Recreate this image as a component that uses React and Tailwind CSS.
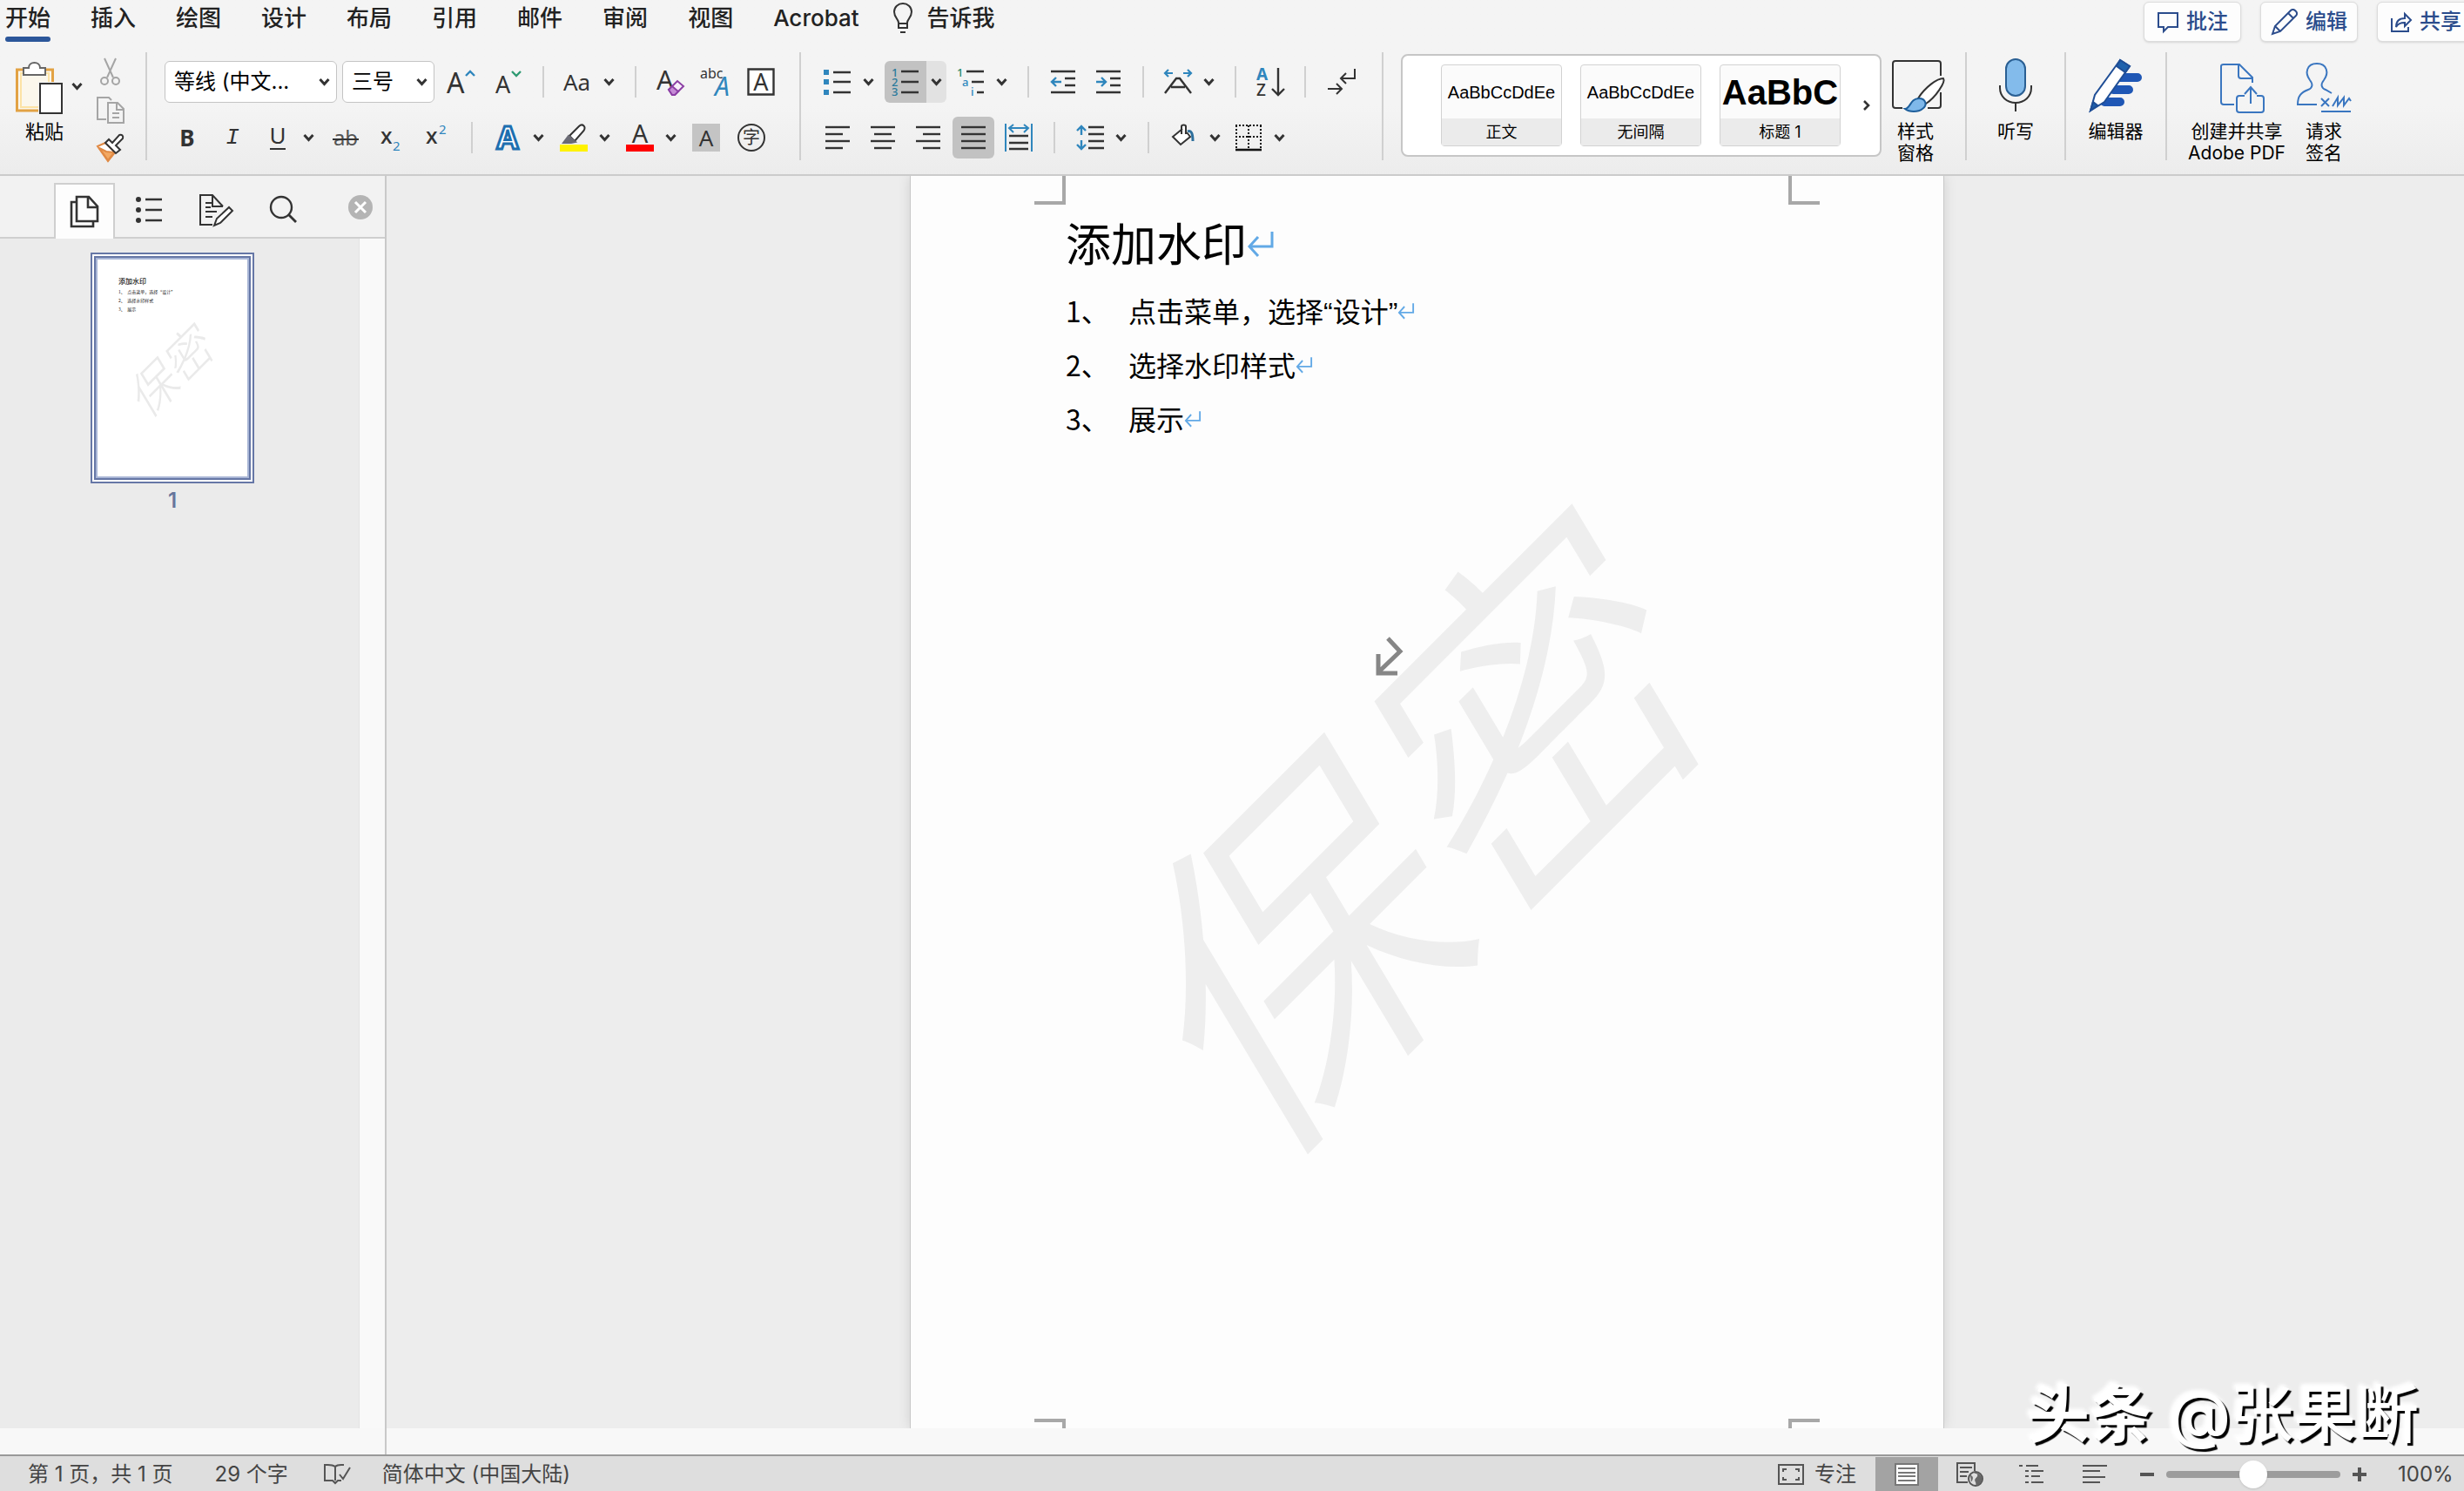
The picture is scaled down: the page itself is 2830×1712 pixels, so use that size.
import React from 'react';
import clsx from 'clsx';

const INK = '#333333';
const BLUE = '#2f86bd';

const Svg = ({ w = 32, h = 32, className, children }) => (
    <svg
        width={w}
        height={h}
        viewBox={`0 0 ${w} ${h}`}
        fill="none"
        stroke={INK}
        strokeWidth="2"
        className={clsx('shrink-0 overflow-visible', className)}
        aria-hidden="true"
    >
        {children}
    </svg>
);

const Glyph = ({ x, y, size, fill = INK, children, ...rest }) => (
    <text x={x} y={y} fontSize={size} fill={fill} stroke="none" fontFamily="'Noto Sans', sans-serif" {...rest}>
        {children}
    </text>
);

const Chevron = ({ className }) => (
    <Svg w={13} h={10} className={className}>
        <path d="M1.5 2l5 5.5L11.5 2" strokeWidth="3" />
    </Svg>
);

const IconButton = ({ label, children, className }) => (
    <button type="button" aria-label={label} className={clsx('flex w-8 h-12 shrink-0 items-center justify-center', className)}>
        {children}
    </button>
);

// icon with a small drop-down arrow at its right
const SplitButton = ({ label, children }) => (
    <div className="flex shrink-0 items-center gap-[13px]">
        <IconButton label={label}>{children}</IconButton>
        <button type="button" aria-label={`${label}选项`} className="flex h-12 items-center">
            <Chevron />
        </button>
    </div>
);

const Divider = ({ tall, className }) => (
    <div className={clsx('w-[2px] shrink-0 bg-[#d0d0d0]', tall ? 'h-[124px]' : 'h-9', className)} />
);

const Lines = ({ rows }) => (
    <Svg>
        {rows.map(([x1, x2], i) => (
            <path key={i} d={`M${x1} ${4 + i * 8}H${x2}`} strokeWidth="2.4" />
        ))}
    </Svg>
);

/* ---------- top tabs ---------- */

const tabs = ['开始', '插入', '绘图', '设计', '布局', '引用', '邮件', '审阅', '视图', 'Acrobat'];

const CornerButton = ({ icon, label }) => (
    <button
        type="button"
        className="flex h-[46px] w-28 shrink-0 items-center justify-center gap-2 rounded-md border border-[#dcdcdc] bg-[#fdfdfd] text-2xl font-medium text-[#2b4c8c] shadow-sm"
    >
        {icon}
        <span className="whitespace-nowrap">{label}</span>
    </button>
);

const TabBar = () => (
    <nav className="flex h-[60px] items-start pl-1.5">
        <div className="flex shrink-0 gap-[46px]">
            {tabs.map((tab, i) => (
                <button key={tab} type="button" className="flex flex-col text-[26px] leading-[42px] font-medium text-[#222]">
                    <span>{tab}</span>
                    {i === 0 && <span className="h-1.5 w-full rounded-full bg-[#2b569a]" />}
                </button>
            ))}
        </div>
        <button type="button" className="ml-[38px] flex shrink-0 items-center gap-4 text-[26px] leading-[42px] font-medium text-[#222]">
            <Svg w={24} h={38}>
                <path d="M7 24c0-4-5-6-5-12.500C2 6 6.500 2 12 2s10 4 10 9.500C22 18 17 20 17 24v6H7zM7 25h10M9 35h6" />
            </Svg>
            告诉我
        </button>
        <div className="ml-auto -mr-3 flex gap-[22px] pt-0.5">
            <CornerButton
                label="批注"
                icon={
                    <Svg w={26} h={26}>
                        <path d="M2 3h22v16H13l-5 5v-5H2z" stroke="#2b4c8c" />
                    </Svg>
                }
            />
            <CornerButton
                label="编辑"
                icon={
                    <Svg w={32} h={32}>
                        <path d="M2 30l3-9L23 3c2-2 4-1 5.500.500S31 7 29 9L11 27zM5 21l6 6M20 6l6 6" stroke="#2b4c8c" />
                    </Svg>
                }
            />
            <CornerButton
                label="共享"
                icon={
                    <Svg w={26} h={26}>
                        <path d="M2 9v15h19v-5M7 19c0-7 4-10 10-10V4l7 7-7 7v-4c-5 0-8 1-10 5z" stroke="#2b4c8c" />
                    </Svg>
                }
            />
        </div>
    </nav>
);

/* ---------- ribbon ---------- */

const PasteGroup = () => (
    <div className="flex shrink-0 gap-4 pt-1.5 pl-4">
        <div className="flex gap-2">
            <button type="button" className="flex w-[58px] flex-col items-center pt-1 text-[22px] leading-[26px] text-black">
                <Svg w={56} h={62} className="mb-1.5">
                    <path d="M2.500 10h41v47h-41z" stroke="#e2a244" strokeWidth="3" fill="#fbf7ec" />
                    <path d="M7 14h32v39H7z" stroke="#fce3a6" />
                    <path d="M10 16V8h6c0-4 3-6 6.500-6S29 4 29 8h6v8z" fill="#fff" stroke="#666" />
                    <path d="M27 24h30v38H27z" fill="#f3f3f3" stroke="none" />
                    <path d="M29 26h25v34H29z" fill="#fff" />
                </Svg>
                <span className="pl-3">粘贴</span>
            </button>
            <button type="button" aria-label="粘贴选项" className="h-[65px]">
                <Chevron />
            </button>
        </div>
        <div className="flex flex-col gap-3">
            <button type="button" aria-label="剪切">
                <Svg>
                    <path d="M9 1l10 22M22 1L12 23" stroke="#a5a5a5" />
                    <circle cx="9" cy="27" r="4" stroke="#a5a5a5" />
                    <circle cx="22" cy="27" r="4" stroke="#a5a5a5" />
                </Svg>
            </button>
            <button type="button" aria-label="复制">
                <Svg>
                    <path d="M11 27H1V2h13l3 3M13 8h11l7 7v16H13zM23 8v8h8M18 20h8M18 25h8" stroke="#a5a5a5" />
                </Svg>
            </button>
            <button type="button" aria-label="格式刷">
                <Svg>
                    <path d="M1 14l9-4 11 11-8 10z" fill="#fff" stroke="#e08a45" />
                    <path d="M3 16l8 4 9 1-7 9z" fill="#f3a963" stroke="#e08a45" />
                    <path d="M10 10l4-4 4 4 8-9c3-1 5 1 4 4l-8 8 5 5-5 4z" fill="#fff" />
                </Svg>
            </button>
        </div>
    </div>
);

const Dropdown = ({ label, value, className }) => (
    <div className={clsx('relative shrink-0', className)}>
        <select aria-label={label} className="h-12 w-full appearance-none rounded-md border border-[#c4c4c4] bg-white pl-2.5 text-2xl text-black">
            <option>{value}</option>
        </select>
        <Chevron className="pointer-events-none absolute top-[19px] right-2" />
    </div>
);

const FontGroup = () => (
    <div className="flex shrink-0 flex-col gap-4 pl-5">
        <div className="flex items-center gap-[23px]">
            <div className="flex items-center gap-1.5">
                <Dropdown label="字体" value="等线 (中文..." className="w-[198px]" />
                <Dropdown label="字号" value="三号" className="w-[106px]" />
                <IconButton label="增大字号" className="ml-2">
                    <Svg>
                        <Glyph x="0" y="29" size="32">A</Glyph>
                        <path d="M22 9l5-5 5 5" stroke={BLUE} strokeWidth="2.4" />
                    </Svg>
                </IconButton>
            </div>
            <IconButton label="减小字号">
                <Svg>
                    <Glyph x="1" y="29" size="27">A</Glyph>
                    <path d="M20 4l5 5 5-5" stroke="#2f9a72" strokeWidth="2.4" />
                </Svg>
            </IconButton>
            <Divider />
            <SplitButton label="更改大小写">
                <Svg w={34}>
                    <Glyph x="0" y="26" size="26">Aa</Glyph>
                </Svg>
            </SplitButton>
            <Divider />
            <div className="flex gap-5">
                <IconButton label="清除格式">
                    <Svg>
                        <Glyph x="0" y="25" size="31">A</Glyph>
                        <path d="M14 25l10-10 7 6-10 10h-3z" fill="#f8effb" stroke="#8c3fa5" />
                        <path d="M14 25l4-4 7 6-4 4h-3z" fill="#c58bd6" stroke="#8c3fa5" />
                    </Svg>
                </IconButton>
                <IconButton label="拼音指南">
                    <Svg w={36} h={34}>
                        <Glyph x="0" y="13" size="16">abc</Glyph>
                        <Glyph x="17" y="33" size="30" fill={BLUE} fontStyle="italic">A</Glyph>
                    </Svg>
                </IconButton>
                <IconButton label="字符边框">
                    <Svg>
                        <path d="M1.500 1.500h29v29h-29z" fill="#fff" strokeWidth="2.4" />
                        <Glyph x="16" y="26" size="27" textAnchor="middle">A</Glyph>
                    </Svg>
                </IconButton>
            </div>
        </div>
        <div className="flex items-center gap-6 pl-2.5">
            <div className="flex gap-5 text-[26px] text-[#333]">
                <IconButton label="加粗" className="font-bold font-['Noto_Sans',sans-serif]">B</IconButton>
                <IconButton label="倾斜" className="italic font-['Liberation_Mono',monospace]">I</IconButton>
                <SplitButton label="下划线">
                    <Svg>
                        <Glyph x="16" y="23" size="26" textAnchor="middle">U</Glyph>
                        <path d="M7 29h18" />
                    </Svg>
                </SplitButton>
                <IconButton label="删除线">
                    <Svg>
                        <Glyph x="16" y="25" size="24" fill="#555" textAnchor="middle">ab</Glyph>
                        <path d="M1 18h30" />
                    </Svg>
                </IconButton>
                <IconButton label="下标">
                    <Svg>
                        <Glyph x="4" y="23" size="25" fontWeight="500">x</Glyph>
                        <Glyph x="18" y="31" size="15" fill={BLUE}>2</Glyph>
                    </Svg>
                </IconButton>
                <IconButton label="上标">
                    <Svg>
                        <Glyph x="4" y="23" size="25" fontWeight="500">x</Glyph>
                        <Glyph x="19" y="12" size="15" fill={BLUE}>2</Glyph>
                    </Svg>
                </IconButton>
            </div>
            <Divider />
            <div className="flex gap-[18px]">
                <SplitButton label="文本效果">
                    <Svg w={34} h={34}>
                        <text
                            x="17"
                            y="30"
                            fontSize="36"
                            fontWeight="bold"
                            fontFamily="'Noto Sans', sans-serif"
                            textAnchor="middle"
                            fill="#fff"
                            stroke="#1d6fb0"
                            strokeWidth="3"
                        >
                            A
                        </text>
                    </Svg>
                </SplitButton>
                <SplitButton label="突出显示">
                    <Svg>
                        <path d="M0 24h32v8H0z" fill="#fff200" stroke="none" />
                        <path d="M11 14L22 3c2-2 4-2 5.500-.500s1.500 3 0 5.500L17 20z" fill="#fff" />
                        <path d="M10 14l8 7-5 1H4z" fill="#6b6b75" stroke="#6b6b75" />
                    </Svg>
                </SplitButton>
                <SplitButton label="字体颜色">
                    <Svg>
                        <Glyph x="16" y="22" size="29" textAnchor="middle">A</Glyph>
                        <path d="M0 24h32v8H0z" fill="#ff0000" stroke="none" />
                    </Svg>
                </SplitButton>
                <div className="flex gap-5">
                    <IconButton label="字符底纹">
                        <Svg>
                            <path d="M0 0h32v32H0z" fill="#c4c4c4" stroke="none" />
                            <Glyph x="16" y="26" size="26" textAnchor="middle">A</Glyph>
                        </Svg>
                    </IconButton>
                    <IconButton label="带圈字符">
                        <Svg>
                            <circle cx="16" cy="16" r="15" />
                            <text x="16" y="23" fontSize="20" textAnchor="middle" fill={INK} stroke="none" fontFamily="'Noto Sans CJK SC', sans-serif">
                                字
                            </text>
                        </Svg>
                    </IconButton>
                </div>
            </div>
        </div>
    </div>
);

const ParagraphGroup = () => (
    <div className="flex shrink-0 flex-col gap-4 pl-[26px]">
        <div className="flex items-center gap-[23px]">
            <div className="flex items-center gap-3">
                <SplitButton label="项目符号">
                    <Svg>
                        <path d="M0 2h6v6H0zM0 13h6v6H0zM0 25h6v6H0z" fill={BLUE} stroke="none" />
                        <path d="M11 5h20M11 16h20M11 28h20" strokeWidth="2.4" />
                    </Svg>
                </SplitButton>
                <div className="flex overflow-hidden rounded-md">
                    <button type="button" aria-label="编号" aria-pressed="true" className="flex h-12 w-12 items-center justify-center bg-[#c2c2c2]">
                        <Svg h={34}>
                            <Glyph x="0" y="11" size="13" fill="#2a7a9c" fontWeight="500">1</Glyph>
                            <Glyph x="0" y="22" size="13" fill="#2a7a9c" fontWeight="500">2</Glyph>
                            <Glyph x="0" y="33" size="13" fill="#2a7a9c" fontWeight="500">3</Glyph>
                            <path d="M11 5h20M11 17h20M11 29h20" strokeWidth="2.4" />
                        </Svg>
                    </button>
                    <button type="button" aria-label="编号选项" className="flex h-12 w-[23px] items-center justify-center bg-[#e2e2e2]">
                        <Chevron />
                    </button>
                </div>
                <SplitButton label="多级列表">
                    <Svg h={34}>
                        <Glyph x="0" y="11" size="13" fill="#2a8a6c" fontWeight="500">1</Glyph>
                        <Glyph x="6" y="22" size="13" fill={BLUE} fontWeight="500">a</Glyph>
                        <Glyph x="16" y="33" size="13" fill={BLUE} fontWeight="500">i</Glyph>
                        <path d="M11 5h20M17 17h14M23 29h8" strokeWidth="2.4" />
                    </Svg>
                </SplitButton>
            </div>
            <Divider />
            <div className="flex gap-5">
                <IconButton label="减少缩进量">
                    <Svg>
                        <path d="M2 4h28M18 12h12M18 20h12M2 28h28" strokeWidth="2.4" />
                        <path d="M14 16H3M8 11l-5 5 5 5" stroke={BLUE} strokeWidth="2.4" />
                    </Svg>
                </IconButton>
                <IconButton label="增加缩进量">
                    <Svg>
                        <path d="M2 4h28M18 12h12M18 20h12M2 28h28" strokeWidth="2.4" />
                        <path d="M2 16h11M8 11l5 5-5 5" stroke={BLUE} strokeWidth="2.4" />
                    </Svg>
                </IconButton>
            </div>
            <Divider />
            <SplitButton label="中文版式">
                <Svg>
                    <path d="M10 6H1M5 2L1 6l4 4M22 6h9M27 2l4 4-4 4" stroke={BLUE} strokeWidth="2.2" />
                    <path d="M1 29L14 12h4l13 17M8 22h16" strokeWidth="2.4" />
                </Svg>
            </SplitButton>
            <Divider />
            <IconButton label="排序">
                <Svg>
                    <Glyph x="0" y="14" size="19" fill={BLUE} fontWeight="bold">A</Glyph>
                    <Glyph x="0" y="32" size="19" fontWeight="500">Z</Glyph>
                    <path d="M25 0v30M18 24l7 7 7-7" strokeWidth="2.4" />
                </Svg>
            </IconButton>
            <Divider />
            <IconButton label="显示编辑标记" className="ml-0.5">
                <Svg>
                    <path d="M31 1v11H15M21 6l-6 6 6 6M0 24h16M10 18l6 6-6 6" />
                </Svg>
            </IconButton>
        </div>
        <div className="flex items-center gap-6">
            <div className="flex gap-5">
                <IconButton label="左对齐">
                    <Lines rows={[[2, 30], [2, 22], [2, 30], [2, 22]]} />
                </IconButton>
                <IconButton label="居中">
                    <Lines rows={[[2, 30], [6, 26], [2, 30], [6, 26]]} />
                </IconButton>
                <IconButton label="右对齐">
                    <Lines rows={[[2, 30], [10, 30], [2, 30], [10, 30]]} />
                </IconButton>
                <button type="button" aria-label="两端对齐" aria-pressed="true" className="-mx-2 flex h-12 w-12 items-center justify-center rounded-md bg-[#c2c2c2]">
                    <Lines rows={[[2, 30], [2, 30], [2, 30], [2, 30]]} />
                </button>
                <IconButton label="分散对齐">
                    <Svg>
                        <path d="M1 0v32M31 0v32M5 5h22M10 1L5 5l5 5M22 1l5 4-5 5" stroke={BLUE} />
                        <path d="M5 14h22M5 22h22M5 29h22" strokeWidth="2.4" />
                    </Svg>
                </IconButton>
            </div>
            <Divider />
            <SplitButton label="行距">
                <Svg>
                    <path d="M6 13V3M1 8l5-5 5 5M6 19v10M1 24l5 5 5-5" stroke={BLUE} strokeWidth="2.4" />
                    <path d="M14 4h18M14 12h18M14 20h18M14 28h18" strokeWidth="2.4" />
                </Svg>
            </SplitButton>
            <Divider />
            <div className="flex gap-4">
                <SplitButton label="底纹">
                    <Svg>
                        <path d="M14 6L3 15l9 9 11-9-4-5M13 12V3c0-2 5-2 5 0v9" fill="#fff" />
                        <path d="M20 9c4-2 6 2 6 11" stroke="#2d6f9c" strokeWidth="3" />
                    </Svg>
                </SplitButton>
                <SplitButton label="边框">
                    <Svg>
                        <path d="M1 2h30M1 15h30M2 2v26M16 2v26M30 2v26" strokeDasharray="2 2" stroke="#111" />
                        <path d="M1 30h30" stroke="#111" strokeWidth="2.6" />
                    </Svg>
                </SplitButton>
            </div>
        </div>
    </div>
);

const styles = [
    { name: '正文', sample: 'AaBbCcDdEe' },
    { name: '无间隔', sample: 'AaBbCcDdEe' },
    { name: '标题 1', sample: 'AaBbC', heading: true },
];

const StyleGallery = () => (
    <div className="ml-5 mt-0.5 flex h-[118px] w-[552px] shrink-0 items-center gap-[21px] rounded-lg border-2 border-[#c6c6c6] bg-white pl-11">
        {styles.map((style) => (
            <button
                key={style.name}
                type="button"
                className="flex h-[94px] w-[139px] flex-col rounded border border-[#d2d2d2] bg-[#fbfbfb] text-black"
            >
                <span
                    className={clsx(
                        "flex w-full flex-1 items-center justify-center font-['Liberation_Sans',sans-serif]",
                        style.heading ? 'text-[40px] font-bold leading-10' : 'text-xl'
                    )}
                >
                    {style.sample}
                </span>
                <span className="w-full bg-[#ebebeb] text-center text-lg leading-[31px]">{style.name}</span>
            </button>
        ))}
        <button type="button" aria-label="更多样式" className="ml-1">
            <Svg w={10} h={14}>
                <path d="M2 2l5 5-5 5" strokeWidth="2.6" />
            </Svg>
        </button>
    </div>
);

const BigButton = ({ icon, lines, className }) => (
    <button type="button" className={clsx('flex shrink-0 flex-col items-center self-start pt-1.5 text-[21px] leading-[25px] text-black', className)}>
        {icon}
        <span className="mt-2 block whitespace-nowrap">
            {lines.map((line) => (
                <span key={line} className="block">{line}</span>
            ))}
        </span>
    </button>
);

const Ribbon = () => (
    <div className="flex h-[142px] items-start border-b-2 border-[#cbcbcb]">
        <PasteGroup />
        <Divider tall className="ml-6" />
        <div className="pt-2.5"><FontGroup /></div>
        <Divider tall className="ml-7" />
        <div className="pt-2.5"><ParagraphGroup /></div>
        <Divider tall className="ml-[30px]" />
        <StyleGallery />
        <BigButton
            className="mr-[22px] ml-1 w-[70px]"
            lines={['样式', '窗格']}
            icon={
                <Svg w={70} h={64}>
                    <g transform="translate(8 0)">
                        <path d="M56 21V7c0-2-1-3-3-3H4C2 4 1 5 1 7v48c0 2 1 3 3 3h8M41 58h12c2 0 3-1 3-3V40" />
                        <path d="M30 47C38 34 52 24 59 24c3 4-9 22-20 29z" fill="#fff" />
                        <path d="M15 59c6 0 6-12 16-12 8 0 10 8 4 12-5 4-15 4-20 0z" fill="#7fb8ea" stroke="#1e5f9c" />
                    </g>
                </Svg>
            }
        />
        <Divider tall />
        <BigButton
            className="w-28"
            lines={['听写']}
            icon={
                <Svg w={40} h={64}>
                    <rect x="9" y="2" width="22" height="42" rx="11" fill="#83bbeb" stroke="#2a5f93" />
                    <path d="M2 32v3c0 10 8 17 18 17s18-7 18-17v-3M20 52v10" />
                </Svg>
            }
        />
        <Divider tall />
        <BigButton
            className="w-[114px]"
            lines={['编辑器']}
            icon={
                <Svg w={62} h={64}>
                    <path d="M34 23h22M28 37h18M18 51h18" stroke="#1f57b5" strokeWidth="10" strokeLinecap="round" />
                    <path d="M2 61l5-18L36 3l11 7-29 41z" fill="#fff" stroke="#1f4e96" />
                    <path d="M36 3l-4 7 10 7 5-7zM2 61l3-10 5 4z" fill="#1f62ad" stroke="#1f4e96" />
                </Svg>
            }
        />
        <Divider tall />
        <BigButton
            className="ml-[22px] w-[116px]"
            lines={['创建并共享', 'Adobe PDF']}
            icon={
                <Svg w={64} h={64}>
                    <g transform="translate(12 0)">
                        <path d="M17 54H5c-2 0-3-1-3-3V10c0-1 1-2 3-2h18l15 15v6M22 8v13c0 2 1 3 3 3h13" stroke="#3a76c0" />
                        <path d="M29 44h-6c-2 0-3 1-3 3v13c0 2 1 3 3 3h25c2 0 3-1 3-3V47c0-2-1-3-3-3h-5M36 53V35M29 42l7-8 7 8" stroke="#3a76c0" />
                    </g>
                </Svg>
            }
        />
        <BigButton
            className="ml-2 w-[68px]"
            lines={['请求', '签名']}
            icon={
                <Svg w={64} h={64}>
                    <path d="M24 54H2c0-10 4-14 12-17 5-2 6-6 2-11-6-8-4-19 8-19s14 11 8 19c-4 5-3 9 2 11l7 4" stroke="#3a76c0" />
                    <path d="M29 47l9 9M38 47l-9 9M42 56l6-10v9l7-9v9l6-8 2 3M29 62h34" stroke="#3a76c0" />
                </Svg>
            }
        />
    </div>
);

/* ---------- side panel ---------- */

const SideTab = ({ label, active, children }) => (
    <button
        type="button"
        aria-label={label}
        aria-pressed={!!active}
        className={clsx(
            'flex h-full items-center justify-center',
            active ? 'w-[70px] border-x-2 border-t-2 border-[#cfcfcf] bg-[#fdfdfd]' : 'w-[77px] border-b-2 border-[#cfcfcf]'
        )}
    >
        {children}
    </button>
);

const thumbLines = ['1、　点击菜单，选择“设计”', '2、　选择水印样式', '3、　展示'];

const SidePanel = () => (
    <aside className="flex w-[444px] shrink-0 flex-col border-r-2 border-[#c9c9c9]">
        <div className="flex h-[72px] bg-[#f2f2f2] pt-2">
            <div className="w-[62px] border-b-2 border-[#cfcfcf]" />
            <SideTab label="缩略图" active>
                <Svg w={34} h={38}>
                    <path d="M7 8H2v28h25v-5M8 2h14l10 11v17H8zM21 2v12h11" strokeWidth="2.6" />
                </Svg>
            </SideTab>
            <SideTab label="文档结构图">
                <Svg w={34} h={34}>
                    <path d="M13 5h19M13 17h19M13 29h19" strokeWidth="2.4" />
                    <circle cx="5" cy="5" r="3" fill={INK} stroke="none" />
                    <circle cx="5" cy="17" r="3" fill={INK} stroke="none" />
                    <circle cx="5" cy="29" r="3" fill={INK} stroke="none" />
                </Svg>
            </SideTab>
            <SideTab label="审阅窗格">
                <Svg w={40} h={38}>
                    <path d="M16 36H2V2h14l12 13M16 2v13h12M8 11h7M8 16h6M8 21h13M8 27h8" />
                    <path d="M18 37l3-8 14-13 4 4-14 14z" fill="#fff" />
                </Svg>
            </SideTab>
            <SideTab label="查找">
                <Svg w={32} h={34}>
                    <circle cx="14" cy="14" r="12" strokeWidth="2.4" />
                    <path d="M22 22l9 9" strokeWidth="2.8" />
                </Svg>
            </SideTab>
            <div className="flex flex-1 justify-end border-b-2 border-[#cfcfcf] pt-3.5 pr-3.5">
                <button type="button" aria-label="关闭" className="h-7">
                    <Svg w={28} h={28}>
                        <circle cx="14" cy="14" r="14" fill="#b4b4b4" stroke="none" />
                        <path d="M8 8l12 12M20 8L8 20" stroke="#fff" strokeWidth="3" />
                    </Svg>
                </button>
            </div>
        </div>
        <div className="flex min-h-0 flex-1">
            <div className="flex flex-1 flex-col items-center bg-[#ebebeb] pt-4 pr-4">
                <button type="button" className="relative flex h-[265px] w-[188px] flex-col overflow-hidden border-[6px] border-double border-[#6677a6] bg-white pt-5 pl-[26px] text-left font-['Noto_Sans_CJK_SC',sans-serif] text-[#222] ring-2 ring-[#a9b6d6] ring-inset">
                    <span className="text-[8px] leading-[14px] font-medium">添加水印</span>
                    {thumbLines.map((line) => (
                        <span key={line} className="block text-[5px] leading-[10px] whitespace-nowrap">{line}</span>
                    ))}
                    <span className="absolute top-[94px] left-[26px] -rotate-45 text-[56px] leading-[72px] font-light whitespace-nowrap text-[#eaeaea] italic">
                        保密
                    </span>
                </button>
                <span className="pt-1 text-2xl font-semibold text-[#66759c]">1</span>
            </div>
            <div className="w-[30px] border-l border-[#e2e2e2] bg-[#f9f9f9]" />
        </div>
        <div className="h-[30px] bg-[#f8f8f8]" />
    </aside>
);

/* ---------- document ---------- */

const ParagraphMark = ({ large }) => (
    <svg
        width={large ? 32 : 20}
        height={large ? 32 : 20}
        viewBox="0 0 32 32"
        fill="none"
        stroke="#62a9e6"
        strokeWidth="3"
        className={clsx('inline-block', large ? 'align-[4px]' : 'align-[3px]')}
        aria-hidden="true"
    >
        <path d="M29 2v17H3M13 8L3 19l10 11" />
    </svg>
);

const Quote = ({ children }) => <span className="font-['Liberation_Sans',sans-serif]">{children}</span>;

const listItems = [
    <>点击菜单，选择<Quote>“</Quote>设计<Quote>”</Quote></>,
    '选择水印样式',
    '展示',
];

const Document = () => (
    <main className="flex min-w-0 flex-1 flex-col bg-[#ededed]">
        <div className="flex min-h-0 flex-1 justify-center overflow-hidden">
            <article className="relative ml-1 flex w-[1188px] flex-col border-x border-[#c8c8c8] bg-[#fdfdfd] font-['Noto_Sans_CJK_SC',sans-serif] text-black shadow-[0_0_14px_rgba(0,0,0,0.12)]">
                <div className="flex justify-between px-[142px]">
                    <span className="h-[33px] w-9 border-r-4 border-b-4 border-[#a8a8a8]" />
                    <span className="h-[33px] w-9 border-b-4 border-l-4 border-[#a8a8a8]" />
                </div>
                <div className="flex-1 px-[178px] pt-1">
                    <h1 className="h-[78px] text-[52px] leading-[78px]">
                        添加水印
                        <ParagraphMark large />
                    </h1>
                    <ol className="pt-2 text-[32px] leading-[62px]">
                        {listItems.map((item, i) => (
                            <li key={i} className="flex h-[62px]">
                                <span className="w-[72px]">{i + 1}、</span>
                                <span>
                                    {item}
                                    <ParagraphMark />
                                </span>
                            </li>
                        ))}
                    </ol>
                </div>
                <div className="flex justify-between px-[142px]">
                    <span className="h-[11px] w-9 border-t-4 border-r-4 border-[#a8a8a8]" />
                    <span className="h-[11px] w-9 border-t-4 border-l-4 border-[#a8a8a8]" />
                </div>
                <div className="pointer-events-none absolute inset-0 flex items-center justify-center pt-20 pr-24">
                    <span className="-rotate-45 text-[380px] leading-none font-[350] whitespace-nowrap text-[#eeeeee] italic">保密</span>
                </div>
                <svg
                    width="32"
                    height="46"
                    viewBox="0 0 32 46"
                    fill="none"
                    stroke="#868686"
                    strokeWidth="5"
                    className="absolute top-[529px] left-[534px]"
                    aria-hidden="true"
                >
                    <path d="M14 2l14 15L4 40M3 20v22h22" />
                </svg>
            </article>
        </div>
        <div className="h-[30px] bg-[#f8f8f8]" />
    </main>
);

/* ---------- status bar ---------- */

const ViewButton = ({ label, active, children }) => (
    <button
        type="button"
        aria-label={label}
        aria-pressed={!!active}
        className={clsx('flex h-10 w-[72px] items-center justify-center', active && 'bg-[#a3a3a3]')}
    >
        {children}
    </button>
);

const StatusBar = () => (
    <footer className="flex h-[42px] shrink-0 items-center border-t-2 border-[#999] bg-[#dedede] pt-0.5 pl-8 text-2xl text-[#444]">
        <span>第 1 页，共 1 页</span>
        <span className="ml-12">29 个字</span>
        <button type="button" aria-label="拼写检查" className="ml-10">
            <Svg w={32} h={26}>
                <path d="M14 20V4C10 1 5 2 2 2v18h9l3 3 3-3h4M14 4c3-3 7-2 10-2M19 13l4 5 8-13" stroke="#555" />
            </Svg>
        </button>
        <button type="button" className="ml-9">简体中文 (中国大陆)</button>
        <button type="button" className="mr-[22px] ml-auto flex items-center gap-3">
            <Svg w={30} h={24}>
                <path d="M1 1h28v22H1zM6 9V6h4M20 6h4v3M24 15v3h-4M10 18H6v-3" stroke="#555" />
            </Svg>
            专注
        </button>
        <ViewButton label="页面视图" active>
            <Svg w={28} h={26}>
                <path d="M1 1h26v24H1zM4 6h20M4 11h20M4 15h20M4 20h20" fill="#fff" stroke="#777" />
            </Svg>
        </ViewButton>
        <ViewButton label="Web 版式">
            <Svg w={32} h={28}>
                <path d="M14 23H2V1h20v9M5 6h14M5 11h10M5 16h8" stroke="#555" />
                <circle cx="23" cy="19" r="8" fill="#ddd" stroke="#555" />
                <path d="M22 12c4 1 5 3 2 6s0 4 0 8c4 0 6-4 6-7s-3-7-8-7zM17 15c3 1 3 4 1 7" fill="#666" stroke="#666" strokeWidth="1" />
            </Svg>
        </ViewButton>
        <ViewButton label="大纲">
            <Svg w={30} h={24}>
                <path d="M0 2h4M8 2h14M7 8h4M14 8h14M7 14h4M14 14h10M7 21h4M14 21h14" stroke="#555" />
            </Svg>
        </ViewButton>
        <ViewButton label="草稿">
            <Svg w={28} h={24}>
                <path d="M0 2h28M0 8h20M0 15h26M0 21h20" stroke="#555" />
            </Svg>
        </ViewButton>
        <button type="button" aria-label="缩小" className="ml-4">
            <Svg w={16} h={16}>
                <path d="M0 8h16" stroke="#555" strokeWidth="4" />
            </Svg>
        </button>
        <input
            type="range"
            aria-label="缩放"
            defaultValue="50"
            className="mx-[14px] h-2 w-[200px] appearance-none rounded-full bg-[#9c9c9c] [&::-webkit-slider-thumb]:h-8 [&::-webkit-slider-thumb]:w-8 [&::-webkit-slider-thumb]:appearance-none [&::-webkit-slider-thumb]:rounded-full [&::-webkit-slider-thumb]:bg-white [&::-webkit-slider-thumb]:shadow"
        />
        <button type="button" aria-label="放大">
            <Svg w={16} h={16}>
                <path d="M0 8h16M8 0v16" stroke="#555" strokeWidth="4" />
            </Svg>
        </button>
        <span className="mr-2 ml-9 w-[68px]">100%</span>
    </footer>
);

export default function App() {
    return (
        <div className="relative flex h-screen flex-col overflow-hidden bg-[#ededed] font-['Inter','Noto_Sans_CJK_SC',sans-serif]">
            <header className="shrink-0 bg-linear-to-b from-[#f4f4f4] from-60% to-[#ececec]">
                <TabBar />
                <Ribbon />
            </header>
            <div className="flex min-h-0 flex-1">
                <SidePanel />
                <Document />
            </div>
            <StatusBar />
            <div className="pointer-events-none absolute right-[52px] bottom-9 text-[72px] leading-[104px] font-medium whitespace-nowrap text-white [text-shadow:3px_3px_1px_#000,0_0_6px_#fff,-3px_-3px_4px_#fff]">
                <span className="font-bold">头条</span> @张果断
            </div>
        </div>
    );
}
